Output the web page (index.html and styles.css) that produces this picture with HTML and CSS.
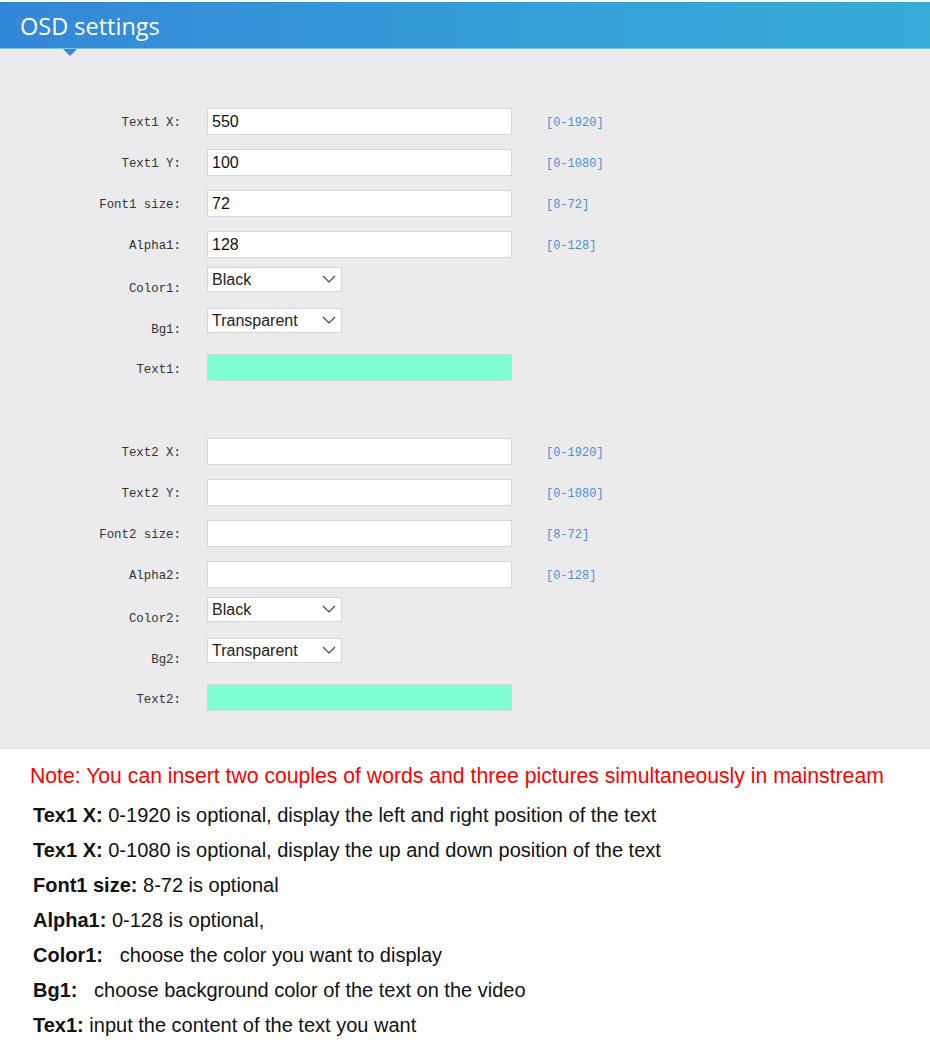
FILE: index.html
```html
<!DOCTYPE html>
<html>
  <head>
    <meta charset="utf-8">
    <title>OSD settings</title>
    <link rel="stylesheet" href="styles.css">
  </head>
  <body>

    <div class="title-bar">
      <h1>OSD settings</h1>
    </div>

    <div class="panel">
      <form class="osd-form">

        <div class="row">
          <label class="lbl">Text1 X:</label>
          <input class="field" type="text" value="550">
          <span class="hint">[0-1920]</span>
        </div>
        <div class="row">
          <label class="lbl">Text1 Y:</label>
          <input class="field" type="text" value="100">
          <span class="hint">[0-1080]</span>
        </div>
        <div class="row">
          <label class="lbl">Font1 size:</label>
          <input class="field" type="text" value="72">
          <span class="hint">[8-72]</span>
        </div>
        <div class="row">
          <label class="lbl">Alpha1:</label>
          <input class="field" type="text" value="128">
          <span class="hint">[0-128]</span>
        </div>
        <div class="row row-select">
          <label class="lbl">Color1:</label>
          <span class="picker">
            <select><option>Black</option><option>White</option><option>Red</option></select>
            <svg class="chev" width="14" height="8" viewBox="0 0 14 8"><path d="M1 1 L7 7 L13 1" fill="none" stroke="#444" stroke-width="1.2"/></svg>
          </span>
        </div>
        <div class="row row-select">
          <label class="lbl">Bg1:</label>
          <span class="picker">
            <select><option>Transparent</option><option>Black</option><option>White</option></select>
            <svg class="chev" width="14" height="8" viewBox="0 0 14 8"><path d="M1 1 L7 7 L13 1" fill="none" stroke="#444" stroke-width="1.2"/></svg>
          </span>
        </div>
        <div class="row">
          <label class="lbl lbl-text">Text1:</label>
          <input class="field text-field" type="text">
        </div>

        <div class="spacer"></div>

        <div class="row">
          <label class="lbl">Text2 X:</label>
          <input class="field" type="text">
          <span class="hint">[0-1920]</span>
        </div>
        <div class="row">
          <label class="lbl">Text2 Y:</label>
          <input class="field" type="text">
          <span class="hint">[0-1080]</span>
        </div>
        <div class="row">
          <label class="lbl">Font2 size:</label>
          <input class="field" type="text">
          <span class="hint">[8-72]</span>
        </div>
        <div class="row">
          <label class="lbl">Alpha2:</label>
          <input class="field" type="text">
          <span class="hint">[0-128]</span>
        </div>
        <div class="row row-select">
          <label class="lbl">Color2:</label>
          <span class="picker">
            <select><option>Black</option><option>White</option><option>Red</option></select>
            <svg class="chev" width="14" height="8" viewBox="0 0 14 8"><path d="M1 1 L7 7 L13 1" fill="none" stroke="#444" stroke-width="1.2"/></svg>
          </span>
        </div>
        <div class="row row-select">
          <label class="lbl">Bg2:</label>
          <span class="picker">
            <select><option>Transparent</option><option>Black</option><option>White</option></select>
            <svg class="chev" width="14" height="8" viewBox="0 0 14 8"><path d="M1 1 L7 7 L13 1" fill="none" stroke="#444" stroke-width="1.2"/></svg>
          </span>
        </div>
        <div class="row">
          <label class="lbl lbl-text">Text2:</label>
          <input class="field text-field" type="text">
        </div>

      </form>
    </div>

    <div class="notes">
      <p class="note">Note: You can insert two couples of words and three pictures simultaneously in mainstream</p>
      <p><b>Tex1 X:</b> 0-1920 is optional, display the left and right position of the text</p>
      <p><b>Tex1 X:</b> 0-1080 is optional, display the up and down position of the text</p>
      <p><b>Font1 size:</b> 8-72 is optional</p>
      <p><b>Alpha1:</b> 0-128 is optional,</p>
      <p><b>Color1:</b>&nbsp;&nbsp; choose the color you want to display</p>
      <p><b>Bg1:</b>&nbsp;&nbsp; choose background color of the text on the video</p>
      <p><b>Tex1:</b> input the content of the text you want</p>
    </div>

  </body>
</html>
```

FILE: styles.css
```css
body {
  margin: 0;
  padding: 0;
  background: #fff;
  font-family: "Liberation Sans", Arial, sans-serif;
}

/* blue heading strip */
.title-bar {
  position: relative;
  margin-top: 2px;
  height: 46px;
  border-bottom: 1px solid #7cc3ee;
  background: linear-gradient(to right, #3387d8, #35a0d7 60%, #36abd6);
}
.title-bar:after {
  content: "";
  position: absolute;
  left: 63px;
  bottom: -8px;
  border-left: 7px solid transparent;
  border-right: 7px solid transparent;
  border-top: 7px solid #3389d8;
}
.title-bar h1 {
  margin: 0;
  padding-left: 20px;
  line-height: 48px;
  color: #fff;
  font-family: "Open Sans", sans-serif;
  font-weight: normal;
  font-size: 23.5px;
}

/* grey form area */
.panel {
  background: #ebebed;
  padding: 53px 0 30px;
}

.osd-form {
  display: flex;
  flex-direction: column;
}

.row {
  display: flex;
  align-items: center;
  height: 41px;
}

.lbl {
  width: 181px;
  text-align: right;
  font-family: "Liberation Mono", monospace;
  font-size: 12.4px;
  color: #333;
  padding-top: 1px;
}
.lbl-text {
  padding-top: 3px;
}

.field {
  box-sizing: border-box;
  width: 305px;
  height: 27px;
  margin: 0 0 2px 26px;
  padding: 0 4px;
  border: 1px solid #d6d6d6;
  background: #fff;
  font-family: "Liberation Sans", Arial, sans-serif;
  font-size: 16px;
  color: #111;
  outline: none;
}
.text-field {
  background: #7fffd4;
  border-color: #cfd8d4;
  margin-bottom: 3px;
}

.hint {
  margin-left: 34px;
  font-family: "Liberation Mono", monospace;
  font-size: 12px;
  color: #4c8fd4;
}

.row-select {
  align-items: flex-start;
}
.row-select .lbl {
  padding-top: 16px;
}

.picker {
  position: relative;
  margin: 1px 0 0 26px;
}
.picker select {
  -webkit-appearance: none;
  appearance: none;
  box-sizing: border-box;
  width: 135px;
  height: 25px;
  padding: 1px 0 1px 4px;
  border: 1px solid #d6d6d6;
  border-radius: 0;
  background: #fff;
  font-family: "Liberation Sans", Arial, sans-serif;
  font-size: 16px;
  color: #222;
}
.chev {
  position: absolute;
  right: 6px;
  top: 8px;
  pointer-events: none;
}

.spacer {
  height: 43px;
}

/* explanation text below the form */
.notes {
  padding: 9px 0 0 33px;
}
.notes p {
  margin: 0;
  height: 35px;
  line-height: 35px;
  font-size: 20px;
  color: #111;
}
.notes p.note {
  margin: 0 0 5px -3px;
  color: #f00;
  font-size: 21.2px;
}
.notes b {
  font-weight: bold;
}
```
